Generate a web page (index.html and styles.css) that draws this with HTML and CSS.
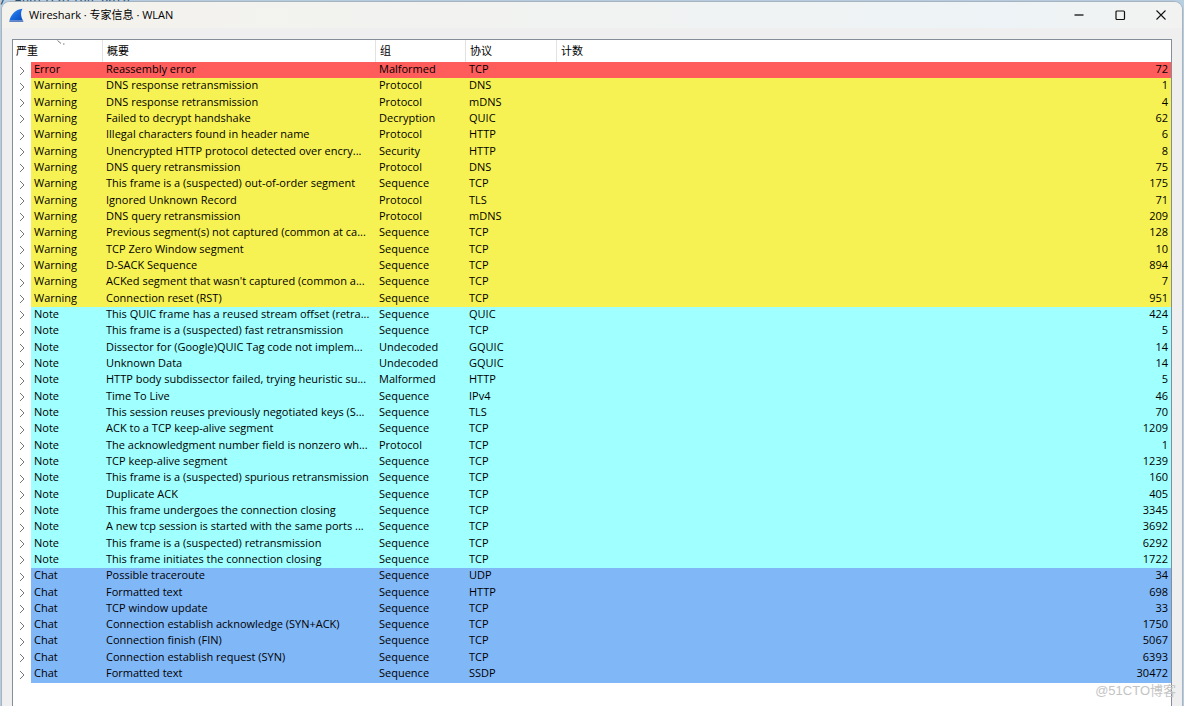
FILE: index.html
```
<!DOCTYPE html>
<html lang="zh-CN">
<head>
<meta charset="utf-8">
<title>Wireshark · 专家信息 · WLAN</title>
<link rel="stylesheet" href="styles.css">
</head>
<body>
<div class="backdrop" aria-hidden="true">/ Application Data</div>
<main class="window">
  <header class="titlebar">
    <svg class="logo" viewBox="0 0 15 14" aria-hidden="true">
      <defs><linearGradient id="fin" x1="0" y1="0" x2="1" y2="1"><stop offset="0" stop-color="#4b9af5"/><stop offset=".5" stop-color="#1769e0"/><stop offset="1" stop-color="#0b49b8"/></linearGradient></defs>
      <path d="M.5 12.5C2 6.500 6 1.500 13.500.7 11.500 3.500 11.700 8.500 14 12.500Z" fill="url(#fin)"/>
      <path d="M.3 13.200H14.300" stroke="#1b50b0" stroke-width="1"/>
    </svg>
    <h1 class="title">Wireshark · 专家信息 · WLAN</h1>
    <button class="control" type="button" aria-label="最小化"><svg viewBox="0 0 12 12"><path d="M1.500 6H10.500" stroke-width="1.300"/></svg></button>
    <button class="control" type="button" aria-label="最大化"><svg viewBox="0 0 12 12"><rect x="2" y="2" width="8.500" height="8.500" rx="1" stroke-width="1.200"/></svg></button>
    <button class="control" type="button" aria-label="关闭"><svg viewBox="0 0 12 12"><path d="M1.500 1.500 10.500 10.500M10.500 1.500 1.500 10.500" stroke-width="1.100"/></svg></button>
  </header>
  <section class="panel">
    <table class="events">
      <colgroup><col class="c-arrow"><col class="c-severity"><col class="c-summary"><col class="c-group"><col class="c-protocol"><col></colgroup>
      <thead>
        <tr>
          <th class="sorted" colspan="2">严重<svg class="sort" viewBox="0 0 8 5" aria-hidden="true"><path d="M.5.5 4 3.500M6 4H7.500"/></svg></th>
          <th>概要</th><th>组</th><th>协议</th><th>计数</th>
        </tr>
      </thead>
      <tbody id="rows"></tbody>
    </table>
  </section>
</main>
<div class="watermark">@51CTO博客</div>
<script src="app.js"></script>
</body>
</html>
```
FILE: styles.css
```
* { box-sizing: border-box; }
body {
  margin: 0;
  height: 100vh;
  overflow: hidden;
  padding: 2px 2px 0;
  background: #b9cfe2;
  font-family: "Open Sans", "Noto Sans CJK SC", sans-serif;
  font-size: 11px;
  color: #000;
}
.backdrop {
  position: absolute;
  top: -8px;
  left: 0;
  font: 12px/14px "DejaVu Sans Mono", monospace;
  color: #24435c;
  white-space: nowrap;
}
.window {
  position: relative;
  display: flex;
  flex-direction: column;
  height: 100%;
  padding: 0 10px;
  background: #efefef;
  border-radius: 8px 8px 0 0;
  box-shadow: 0 0 1px 1px #a3b1bd;
}
.titlebar {
  display: flex;
  align-items: center;
  flex: none;
  height: 26px;
  margin: 0 -10px 11px;
  padding: 0 1px 0 7px;
  border-radius: 8px 8px 0 0;
  background: linear-gradient(90deg, #f4f2ec, #f0f3f3 60%, #edf3f6 85%, #f2f3f1);
}
.logo { width: 15px; height: 14px; }
.title {
  flex: 1;
  margin: 0 0 0 5px;
  font-size: 11px;
  font-weight: 400;
  line-height: 16px;
}
.control {
  display: flex;
  align-items: center;
  justify-content: center;
  width: 41px;
  height: 26px;
  padding: 0;
  border: 0;
  background: none;
}
.control svg {
  width: 12px;
  height: 12px;
  fill: none;
  stroke: #111;
}
.panel {
  flex: 1;
  min-height: 0;
  overflow: hidden;
  border: 1px solid #858d98;
  border-bottom: 0;
  background: #fff;
}
.events {
  width: 100%;
  height: 643px;
  table-layout: fixed;
  border-collapse: separate;
  border-spacing: 0;
}
.c-arrow { width: 18px; }
.c-severity { width: 72px; }
.c-summary { width: 273px; }
.c-group { width: 90px; }
.c-protocol { width: 91px; }
th {
  position: relative;
  height: 22px;
  padding: 0 4px;
  border-right: 1px solid #e2e2e2;
  font-weight: 400;
  line-height: 20px;
  text-align: left;
}
th:first-child { padding-left: 3px; }
th:last-child { border-right: 0; }
.sort {
  position: absolute;
  top: 0;
  left: 44px;
  width: 8px;
  height: 5px;
  fill: none;
  stroke: #777;
}
td {
  padding: 0 3px;
  line-height: 14px;
  vertical-align: top;
  white-space: nowrap;
}
.error { background: #ff5c5c; }
.warning { background: #f7f253; }
.note { background: #a0ffff; }
.chat { background: #80b7f7; }
.arrow { padding: 0; background: #fff; }
.count { text-align: right; }
.expand {
  display: block;
  width: 18px;
  height: 15px;
  padding: 2px 0 0 6px;
  border: 0;
  background: none;
}
.expand svg {
  display: block;
  width: 6px;
  height: 10px;
  fill: none;
  stroke: #777;
}
.watermark {
  position: absolute;
  right: 8px;
  bottom: 6px;
  font: 13px/18px "Liberation Sans", "Noto Sans CJK SC", sans-serif;
  color: #c4c4c4;
}
```
FILE: app.js
```
const groups = {
  Error: [["Reassembly error", "Malformed", "TCP", 72]],
  Warning: [
    ["DNS response retransmission", "Protocol", "DNS", 1],
    ["DNS response retransmission", "Protocol", "mDNS", 4],
    ["Failed to decrypt handshake", "Decryption", "QUIC", 62],
    ["Illegal characters found in header name", "Protocol", "HTTP", 6],
    ["Unencrypted HTTP protocol detected over encry...", "Security", "HTTP", 8],
    ["DNS query retransmission", "Protocol", "DNS", 75],
    ["This frame is a (suspected) out-of-order segment", "Sequence", "TCP", 175],
    ["Ignored Unknown Record", "Protocol", "TLS", 71],
    ["DNS query retransmission", "Protocol", "mDNS", 209],
    ["Previous segment(s) not captured (common at ca...", "Sequence", "TCP", 128],
    ["TCP Zero Window segment", "Sequence", "TCP", 10],
    ["D-SACK Sequence", "Sequence", "TCP", 894],
    ["ACKed segment that wasn't captured (common a...", "Sequence", "TCP", 7],
    ["Connection reset (RST)", "Sequence", "TCP", 951]
  ],
  Note: [
    ["This QUIC frame has a reused stream offset (retra...", "Sequence", "QUIC", 424],
    ["This frame is a (suspected) fast retransmission", "Sequence", "TCP", 5],
    ["Dissector for (Google)QUIC Tag code not implem...", "Undecoded", "GQUIC", 14],
    ["Unknown Data", "Undecoded", "GQUIC", 14],
    ["HTTP body subdissector failed, trying heuristic su...", "Malformed", "HTTP", 5],
    ["Time To Live", "Sequence", "IPv4", 46],
    ["This session reuses previously negotiated keys (S...", "Sequence", "TLS", 70],
    ["ACK to a TCP keep-alive segment", "Sequence", "TCP", 1209],
    ["The acknowledgment number field is nonzero wh...", "Protocol", "TCP", 1],
    ["TCP keep-alive segment", "Sequence", "TCP", 1239],
    ["This frame is a (suspected) spurious retransmission", "Sequence", "TCP", 160],
    ["Duplicate ACK", "Sequence", "TCP", 405],
    ["This frame undergoes the connection closing", "Sequence", "TCP", 3345],
    ["A new tcp session is started with the same ports ...", "Sequence", "TCP", 3692],
    ["This frame is a (suspected) retransmission", "Sequence", "TCP", 6292],
    ["This frame initiates the connection closing", "Sequence", "TCP", 1722]
  ],
  Chat: [
    ["Possible traceroute", "Sequence", "UDP", 34],
    ["Formatted text", "Sequence", "HTTP", 698],
    ["TCP window update", "Sequence", "TCP", 33],
    ["Connection establish acknowledge (SYN+ACK)", "Sequence", "TCP", 1750],
    ["Connection finish (FIN)", "Sequence", "TCP", 5067],
    ["Connection establish request (SYN)", "Sequence", "TCP", 6393],
    ["Formatted text", "Sequence", "SSDP", 30472]
  ]
};

const body = document.getElementById("rows");
for (const [severity, items] of Object.entries(groups)) {
  for (const [summary, group, protocol, count] of items) {
    const row = body.insertRow();
    row.className = severity.toLowerCase();
    row.innerHTML = `<td class="arrow"><button class="expand" type="button" aria-label="展开"><svg viewBox="0 0 6 10"><path d="M1 1 5 5 1 9"/></svg></button></td>
      <td>${severity}</td><td>${summary}</td><td>${group}</td><td>${protocol}</td><td class="count">${count}</td>`;
  }
}
```
